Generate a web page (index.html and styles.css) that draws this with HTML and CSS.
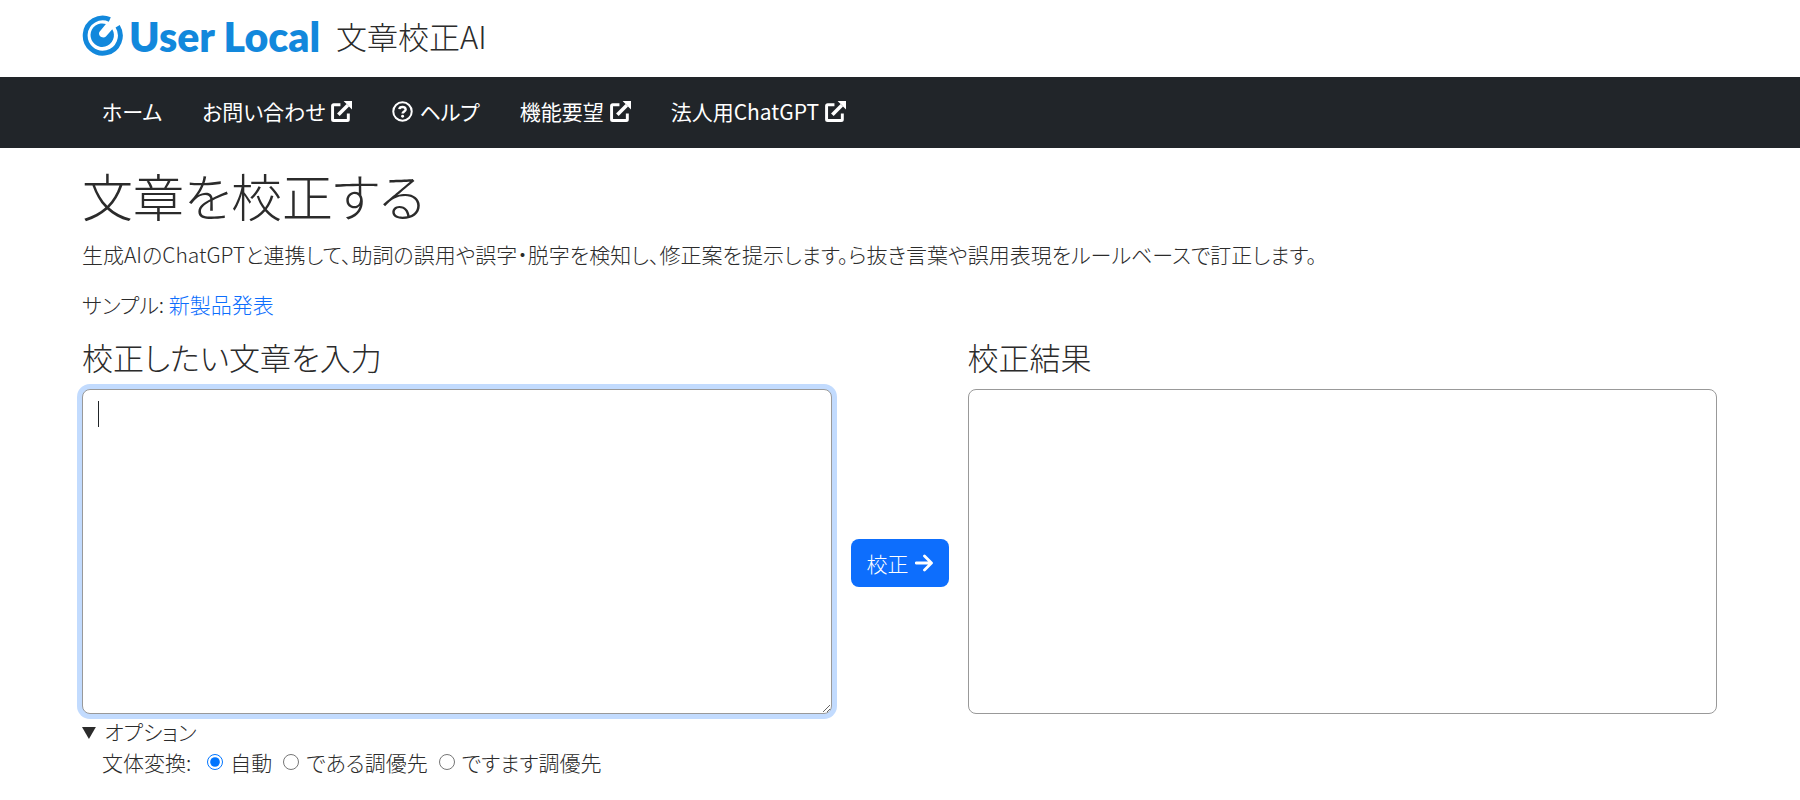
FILE: index.html
```html
<!DOCTYPE html>
<html lang="ja">
<head>
<meta charset="utf-8">
<meta name="viewport" content="width=device-width, initial-scale=1">
<title>文章校正AI</title>
<link rel="stylesheet" href="styles.css">
</head>
<body>
<svg class="sprite" aria-hidden="true">
  <symbol id="external" viewBox="0 0 20 20">
    <path d="M9 3.500H2.500a1 1 0 0 0-1 1v13a1 1 0 0 0 1 1h13a1 1 0 0 0 1-1V12" fill="none" stroke="currentColor" stroke-width="2.8"/>
    <path d="M7 13 16 4" fill="none" stroke="currentColor" stroke-width="3.4"/>
    <path d="M12 0h8v8z" fill="currentColor"/>
  </symbol>
  <symbol id="question" viewBox="0 0 20 20">
    <circle cx="10" cy="10" r="8.8" fill="none" stroke="currentColor" stroke-width="1.9"/>
    <path d="M7 7.800C7.200 5 13 4.800 13 8c0 2-2.900 1.900-2.900 4" fill="none" stroke="currentColor" stroke-width="2.300"/>
    <circle cx="10.100" cy="14.500" r="1.400" fill="currentColor"/>
  </symbol>
  <symbol id="arrow" viewBox="0 0 18 18">
    <path d="M1.200 9H16M9.500 2l7 7-7 7" fill="none" stroke="currentColor" stroke-width="2.800" stroke-linecap="round" stroke-linejoin="round"/>
  </symbol>
</svg>
<header class="header container">
  <a class="brand" href="#">
    <svg class="brand-mark" viewBox="0 0 42 42" aria-hidden="true">
      <path d="M28.500 4.600A18 18 0 1 0 36.500 11.500" fill="none" stroke="currentColor" stroke-width="5"/>
      <path d="M24.500 9.300A12 12 0 1 0 31 14.500L24.500 22C21.500 25 15.500 21 18 17.200Z" fill="currentColor"/>
    </svg>
    <span class="brand-name">User Local</span>
  </a>
  <span class="site-title">文章校正AI</span>
</header>
<nav class="nav">
  <div class="nav-list container">
    <a class="nav-link" href="#">ホーム</a>
    <a class="nav-link" href="#">お問い合わせ<svg class="icon"><use href="#external"/></svg></a>
    <a class="nav-link" href="#"><svg class="icon"><use href="#question"/></svg>ヘルプ</a>
    <a class="nav-link" href="#">機能要望<svg class="icon"><use href="#external"/></svg></a>
    <a class="nav-link" href="#">法人用ChatGPT<svg class="icon"><use href="#external"/></svg></a>
  </div>
</nav>
<main class="main container">
  <h1 class="title">文章を校正する</h1>
  <p class="lead">生成AIのChatGPTと連携して、助詞の誤用や誤字・脱字を検知し、修正案を提示します。ら抜き言葉や誤用表現をルールベースで訂正します。</p>
  <p class="sample">サンプル: <a class="link" href="#">新製品発表</a></p>
  <form class="editor">
    <div class="column">
      <label class="heading" for="source">校正したい文章を入力</label>
      <div class="source">
        <textarea class="box input" id="source"></textarea>
        <span class="caret"></span>
      </div>
      <details class="options" open>
        <summary class="summary">オプション</summary>
        <div class="choices" role="radiogroup" aria-label="文体変換">
          <span class="choices-name">文体変換:</span>
          <label class="choice"><input class="radio" type="radio" name="style" checked>自動</label>
          <label class="choice"><input class="radio" type="radio" name="style">である調優先</label>
          <label class="choice"><input class="radio" type="radio" name="style">ですます調優先</label>
        </div>
      </details>
    </div>
    <button class="submit" type="button">校正<svg class="icon icon-arrow"><use href="#arrow"/></svg></button>
    <div class="column">
      <h2 class="heading">校正結果</h2>
      <div class="box"></div>
    </div>
  </form>
</main>
</body>
</html>
```
FILE: styles.css
```css
* {
  box-sizing: border-box;
}

body {
  margin: 0;
  background: #fff;
  color: #2b2b2b;
  font-family: "Noto Sans CJK JP", sans-serif;
  font-size: 21px;
  font-weight: 300;
  font-feature-settings: "palt";
  line-height: 30px;
}

.sprite {
  position: absolute;
  width: 0;
  height: 0;
}

.container {
  padding-left: 82px;
  padding-right: 83px;
}

.header {
  display: flex;
  align-items: center;
  gap: 16px;
  padding-top: 13px;
  padding-bottom: 19px;
}

.brand {
  display: flex;
  align-items: center;
  gap: 6px;
  color: #1288dc;
  text-decoration: none;
}

.brand-mark {
  width: 41px;
  height: 41px;
}

.brand-name {
  padding-top: 3px;
  font-family: Lato, sans-serif;
  font-size: 41px;
  font-weight: 800;
  line-height: 42px;
}

.site-title {
  font-size: 31px;
  line-height: 40px;
}

.nav {
  background: #212529;
}

.nav-list {
  display: flex;
  align-items: center;
  gap: 40px;
  padding-top: 19px;
  padding-bottom: 22px;
  padding-left: 102px;
}

.nav-link {
  display: flex;
  align-items: center;
  gap: 6px;
  color: #fff;
  font-weight: 400;
  text-decoration: none;
}

.icon {
  width: 21px;
  height: 21px;
}

.main {
  padding-top: 16px;
}

.title {
  margin: 0 0 13px;
  font-size: 51px;
  font-weight: 300;
  line-height: 62px;
}

.lead,
.sample {
  margin: 0;
  padding-bottom: 20px;
}

.link {
  color: #0d6efd;
  text-decoration: none;
}

.editor {
  display: grid;
  grid-template-columns: 1fr 136px 1fr;
}

.heading {
  display: block;
  margin: 0 0 14px;
  font-size: 31px;
  font-weight: 300;
  line-height: 36px;
}

.source {
  display: flex;
  position: relative;
}

.box {
  width: 100%;
  height: 325px;
  border: 1px solid #999;
  border-radius: 8px;
  background: #fff;
}

.input {
  padding: 8px 16px;
  outline: none;
  box-shadow: 0 0 0 5px #c2dbfe;
  font: inherit;
  resize: both;
}

.caret {
  position: absolute;
  top: 12px;
  left: 16px;
  width: 1px;
  height: 26px;
  background: #212529;
}

.submit {
  display: flex;
  align-items: center;
  justify-content: center;
  place-self: center;
  gap: 6px;
  width: 98px;
  height: 48px;
  padding: 0;
  border: 0;
  border-radius: 8px;
  background: #0d6efd;
  color: #fff;
  font: inherit;
}

.icon-arrow {
  width: 18px;
  height: 18px;
}

.options {
  padding-top: 2px;
  padding-bottom: 10px;
}

.choices {
  display: flex;
  align-items: center;
  gap: 11px;
  padding-top: 1px;
  padding-left: 20px;
}

.choices-name {
  padding-right: 5px;
}

.choice {
  display: flex;
  align-items: center;
  gap: 7px;
}

.radio {
  width: 16px;
  height: 16px;
  margin: 0;
}
```
